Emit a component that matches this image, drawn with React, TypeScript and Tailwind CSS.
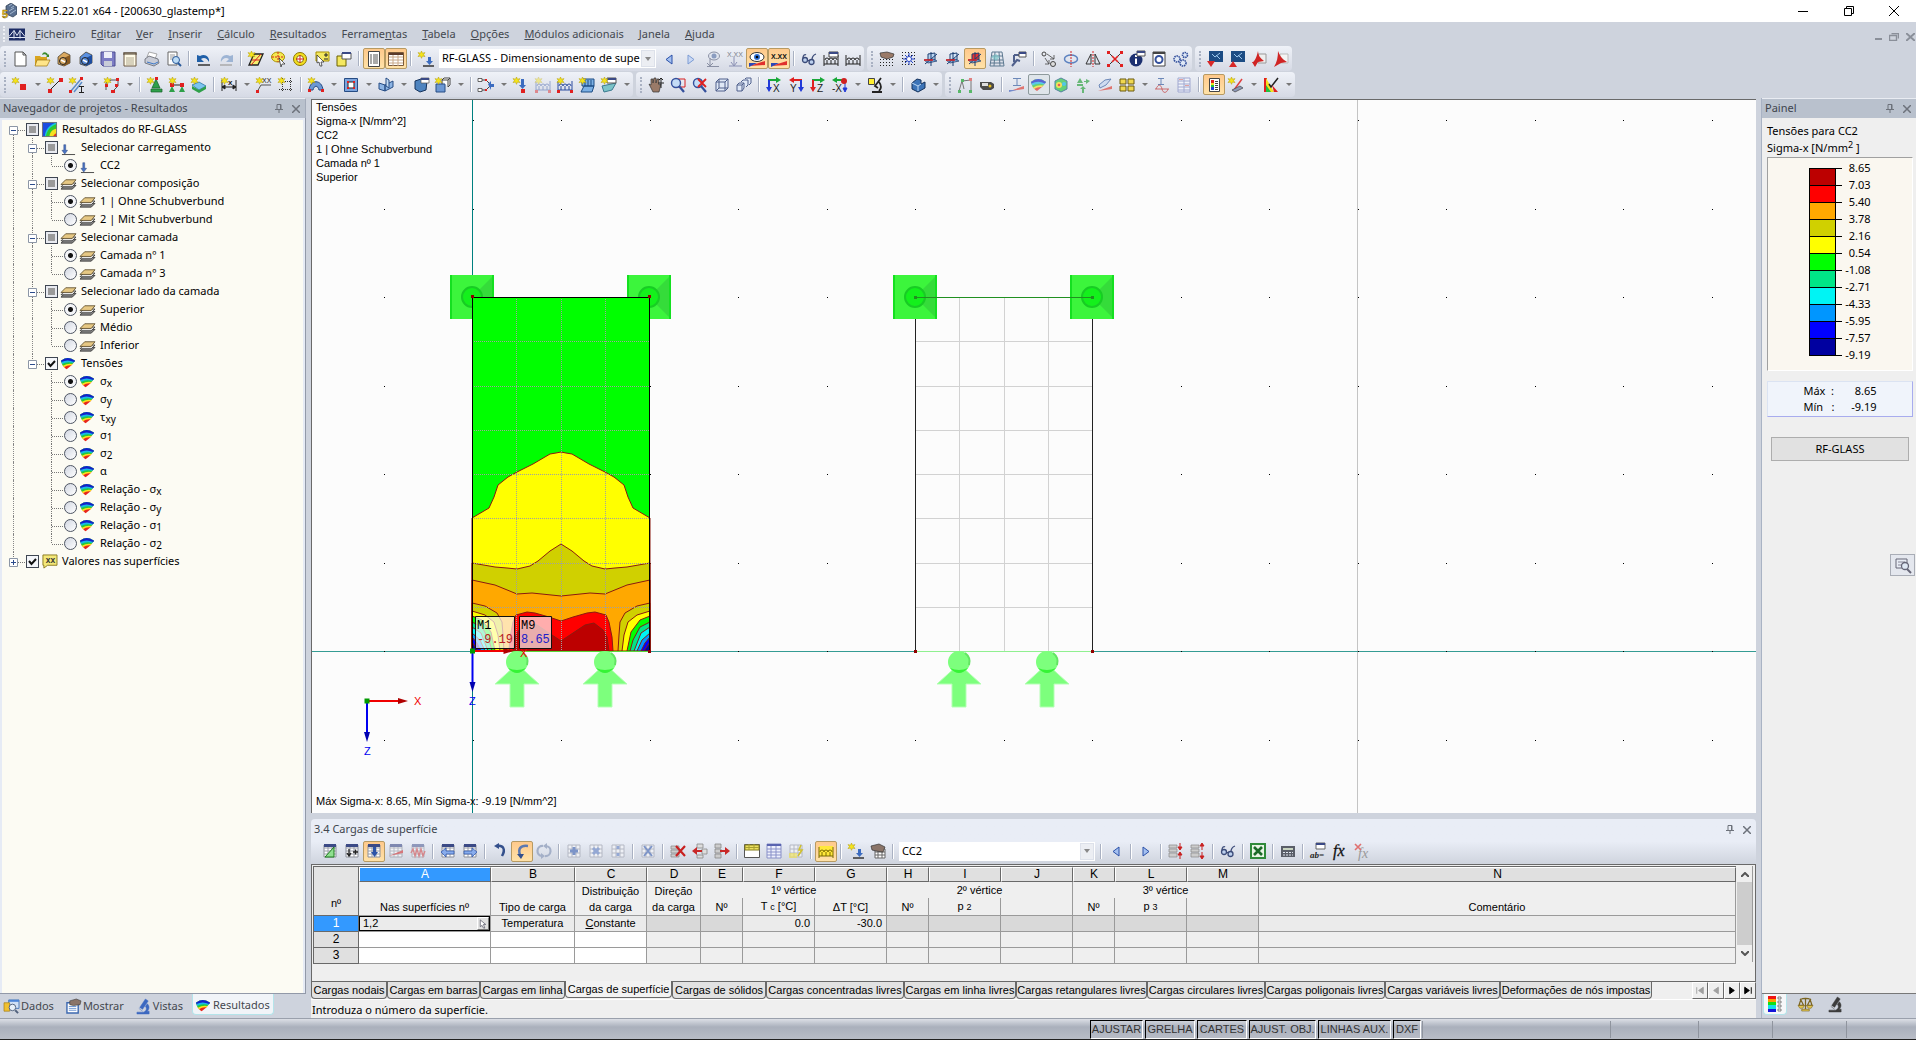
import { Fragment, useState } from 'react';
import type { ReactNode } from 'react';
import clsx from 'clsx';

type Pt = [number, number];

/* ---------- icons ---------- */

const star = (
  <path
    d="M3.5 0l1 2.2L7 1.6 5.6 3.6 7 5.6 4.5 5.1l-1 2.2-1-2.2L0 5.6l1.4-2L0 1.6l2.5.6z"
    fill="#f4e41c"
    stroke="#b39b00"
    strokeWidth=".5"
  />
);

const tableGrid = (
  <>
    <path d="M2 2h12v12H2z" fill="#fff" stroke="#8b8f99" />
    <path d="M2 5h12M2 8h12M2 11h12M6 2v12M10 2v12" stroke="#9a9ea8" fill="none" />
    <path d="M2 1h12v3H2z" fill="#3b4a86" />
  </>
);

const fadedGrid = <path d="M2 2h12v12H2zM2 6h12M2 10h12M6 2v12M10 2v12" fill="#eef0f5" stroke="#b4b8c4" />;

const loadRow = (color: string) => (
  <path
    d="M1 4v11M15 4v11M1 13h14M2 9a2 2 0 014 0 2 2 0 014 0 2 2 0 014 0M4 9v4M8 9v4M12 9v4"
    stroke={color}
    fill="none"
  />
);

const slope = <path d="M1 14l14-5v3z" fill="#e0463c" />;

const workPlane = (fill: string) => (
  <>
    <path d="M5 3l7-1v7l-7 1z" fill={fill} stroke="#1c3f73" />
    <path d="M1 9l9-1 4 2-9 2z" fill="#6fa3dd" stroke="#1c3f73" opacity=".8" />
    <path d="M8 1v14M2 13L14 3" stroke="#1c3f73" />
    <path d="M1 9h9" stroke="#e02020" strokeWidth="1.5" />
  </>
);

const viewAxis = (letter: string, h: string, v: string) => (
  <>
    <path d="M2 3h9" stroke={h} strokeWidth="2" />
    <path d="M10 0l5 3-5 3z" fill={h} />
    <path d="M3 3v8" stroke={v} strokeWidth="2" />
    <path d="M0 10l3 5 3-5z" fill={v} />
    <text x="7" y="15" fontSize="10" fontFamily="Liberation Sans" fill="#222">
      {letter}
    </text>
  </>
);

const surface = (
  <>
    <path d="M0 5Q7-1 15 5L11 10 6 14Q2 12 0 5z" fill="#e8261c" />
    <path d="M0 5Q7-1 15 5L11 10Q7 9.500 3 12Q1 9 0 5z" fill="#ffe21c" />
    <path d="M0 5Q7-1 15 5L12 8.500Q7 7.500 2 10.500Q1 8 0 5z" fill="#22cc3a" />
    <path d="M0 5Q7-1 15 5L13 7.500Q7 5.500 1 8.500z" fill="#18b8e8" />
    <path d="M0 5Q7-1 15 5L14 6.500Q7 3 .5 6.500z" fill="#1420c8" />
  </>
);

const cabinet = (front: string, side: string) => (
  <>
    <path d="M2 6l6-5 6 3v8l-6 3-6-2z" fill={front} stroke="#3a3020" strokeWidth=".7" />
    <path d="M8 7l6-3v8l-6 3z" fill={side} />
    <circle cx="7" cy="10" r="3.500" fill={front} stroke="#222" />
    <path d="M5 9l4 2" stroke="#fff" strokeWidth="1.500" />
  </>
);

const microscope = (color: string) => (
  <path d="M10 0l3 2-6 9-3-2zM3 10l4 3M12 5c3 3 2 6 0 8h2v3H1v-2h7c3-1 4-4 2-6z" fill={color} stroke={color} strokeWidth=".5" />
);

const cubeBlue = <path d="M2 4l6-2 6 2-1 9-6 2-5-3z" fill="#4d83bf" stroke="#14325c" />;

const icons: Record<string, ReactNode> = {
  new: <path d="M3 1h8l3 3v11H3zM11 1v3h3" fill="#fff" stroke="#555" />,
  open: (
    <>
      <path d="M1 5h5l1 1h6v8H1z" fill="#d9a520" />
      <path d="M3 9h13l-3 6H1z" fill="#ffe58a" stroke="#9c7410" strokeWidth=".7" />
      <path d="M8 4c1-4 5-3 6 0l1-1v3h-3l1-1c-1-2-3-2-5-1z" fill="#3b8a2c" />
    </>
  ),
  cabinetBrown: cabinet('#d9a860', '#8a5a20'),
  cabinetBlue: cabinet('#5a90e0', '#1c4ca0'),
  save: (
    <>
      <path d="M1 1h14v14H3l-2-2z" fill="#7c7cc4" stroke="#4c4c90" />
      <path d="M4 1h8v6H4z" fill="#eceef8" />
      <path d="M4 10h8v5H4z" fill="#c8ccd8" />
    </>
  ),
  notepad: (
    <>
      <path d="M2 2h12v13H2z" fill="#fffbe8" stroke="#6a5640" />
      <path d="M2 1v3M4 1v3M6 1v3M8 1v3M10 1v3M12 1v3M14 1v3" stroke="#4c4030" />
      <path d="M4 7h8M4 9h8M4 11h8M4 13h8" stroke="#b0a890" />
    </>
  ),
  print: (
    <>
      <path d="M5 1l8 2-2 5-8-2z" fill="#fff" stroke="#888" strokeWidth=".7" />
      <path d="M1 8l4-3 9 3 1 4-5 3-9-3z" fill="#c9ccd6" stroke="#50545e" strokeWidth=".7" />
      <path d="M3 11l7 2 4-2" stroke="#3c78c8" fill="none" />
    </>
  ),
  preview: (
    <>
      <path d="M2 1h9v13H2z" fill="#fff" stroke="#666" />
      <path d="M4 4h5M4 6h5M4 8h3" stroke="#999" />
      <circle cx="10" cy="9" r="3.500" fill="#bcdcf6" stroke="#2a5a9a" />
      <path d="M12 12l3 3" stroke="#2a5a9a" strokeWidth="2" />
    </>
  ),
  undo: (
    <>
      <path d="M1 4v7h7L5 8c3-2 6-1 8 3 1-5-4-9-9-6z" fill="#1f5fa8" />
      <path d="M2 14h12" stroke="#333" strokeWidth="1.500" />
    </>
  ),
  redo: (
    <>
      <path d="M15 4v7H8l3-3c-3-2-6-1-8 3-1-5 4-9 9-6z" fill="#9db4d4" />
      <path d="M2 14h12" stroke="#aaa" strokeWidth="1.500" />
    </>
  ),
  plane: (
    <>
      <path d="M6 3h9l-5 11H1z" fill="#f5ef70" stroke="#222" strokeWidth="1.300" />
      <path d="M3 14L13 3M4 9h8" stroke="#d82020" />
      {star}
    </>
  ),
  starAxes: (
    <>
      <ellipse cx="8" cy="6" rx="6.500" ry="5" fill="#f4e850" stroke="#a89000" />
      <path d="M8 1v10M2 6h12" stroke="#d82020" strokeDasharray="2 1" />
      <path d="M9 7l6 6h-3l-1 3z" fill="#fff" stroke="#222" strokeWidth=".7" />
    </>
  ),
  starTarget: (
    <>
      <circle cx="8" cy="8" r="6.500" fill="#f4e020" stroke="#8a7400" />
      <circle cx="8" cy="8" r="3.500" fill="#fff" stroke="#8a7400" />
      <path d="M8 4v8M4 8h8" stroke="#d82020" />
    </>
  ),
  select: (
    <>
      <path d="M2 1h13v9H2z" fill="#f4e860" stroke="#a89000" />
      <path d="M10 4h4M12 2v4M10 8h4" stroke="#222" />
      <path d="M3 4l7 7H7l1 4H6l-1-4-2 1z" fill="#fff" stroke="#222" strokeWidth=".7" />
    </>
  ),
  copyYellow: (
    <>
      <path d="M1 5h9v10H1z" fill="#f4e860" stroke="#6a6000" />
      <path d="M6 2h9v6H6z" fill="#fff" stroke="#555" />
      <path d="M6 1h9v2H6z" fill="#3b4a86" />
    </>
  ),
  navTable: (
    <>
      <path d="M2.500.5h11v15h-11z" fill="#fff" stroke="#444" />
      <path d="M4 4h2M4 6h2M4 8h2M4 10h2M4 12h2M7 4h5M7 6h5M7 8h5M7 10h5M7 12h5" stroke="#555" />
    </>
  ),
  tableOn: (
    <>
      <path d="M.5 1.500h15v13H.5z" fill="#fff" stroke="#7a5a3a" />
      <path d="M1 3h14" stroke="#5a3a2a" strokeWidth="2" />
      <path d="M1 6h14M1 9h14M1 12h14M5 4v11M10 4v11" stroke="#c8a888" />
    </>
  ),
  loadStar: (
    <>
      {star}
      <path d="M5 15h11" stroke="#333" strokeWidth="1.500" />
      <path d="M10 6h3v4h2l-3.500 4L8 10h2z" fill="#3c6cc0" />
    </>
  ),
  load: (
    <>
      <path d="M1 15.500h14" stroke="#444" />
      <path d="M3 5h2v6h2l-3 4-3-4h2z" fill="#4a74c4" stroke="#27407c" strokeWidth=".5" />
    </>
  ),
  prev: <path d="M11 4v9L5 8.500z" fill="#a4c0f0" stroke="#2a50a8" />,
  next: <path d="M5 4v9l6-4.500z" fill="#c9d8f4" stroke="#7c9cd4" />,
  nextOn: <path d="M5 4v9l6-4.500z" fill="#a4c0f0" stroke="#2a50a8" />,
  eyeGray: (
    <>
      <ellipse cx="9" cy="5" rx="5.500" ry="4" fill="#dfe4ee" stroke="#8a90a4" />
      <circle cx="9" cy="5" r="2.500" fill="#8a9cc0" />
      <path d="M5 7v8M2 12l3 3 3-3M2 15.500h12" stroke="#8a90a4" fill="none" />
    </>
  ),
  valGray: (
    <>
      <text x="0" y="6" fontSize="7" fontFamily="Liberation Sans" fill="#7c808c">X.XX</text>
      <path d="M2 15h13M7 6v8M4 11l3 4 3-4" stroke="#8a90b4" fill="none" />
    </>
  ),
  eyeOn: (
    <>
      <path d="M0 15l16-5v4z" fill="#e0302c" />
      <path d="M0 12h8l-8 4z" fill="#2a48b8" />
      <ellipse cx="8" cy="6" rx="7" ry="4.500" fill="#fff" stroke="#333" />
      <circle cx="8" cy="6" r="3" fill="#2c6cd0" />
      <circle cx="8" cy="6" r="1.300" fill="#000" />
    </>
  ),
  valOn: (
    <>
      <path d="M0 15l16-5v4z" fill="#e0302c" />
      <path d="M0 12h8l-8 4z" fill="#2a48b8" />
      <text x="0" y="8" fontSize="7" fontWeight="bold" fontFamily="Liberation Sans" fill="#111">X.XX</text>
    </>
  ),
  glasses: (
    <>
      <path d="M2 7c0-3 2-4 3-3M11 9c0-3 1-5 4-6M6 9l3 1" stroke="#3a4a78" strokeWidth="1.300" />
      <circle cx="4" cy="9" r="2.500" fill="#bcd0ee" stroke="#3a4a78" strokeWidth="1.300" />
      <circle cx="10.500" cy="11" r="2.500" fill="#bcd0ee" stroke="#3a4a78" strokeWidth="1.300" />
    </>
  ),
  loadsDlg: (
    <>
      {loadRow('#222')}
      <path d="M6 1h9v5H6z" fill="#fff" stroke="#444" />
      <path d="M6 1h9v2H6z" fill="#3b4a86" />
    </>
  ),
  loads: loadRow('#222'),
  loadActive: (
    <>
      <path d="M1 3h14v10H1z" fill="#ffe83a" />
      {loadRow('#7a6a00')}
    </>
  ),
  gridHand: (
    <>
      <path d="M1 8.500h14M1 11.500h14M1 14.500h14" stroke="#222" strokeDasharray="1 2" />
      <path d="M1 2l7-1 7 2-1 3-6 2-6-2z" fill="#9a7a68" stroke="#333" strokeWidth=".7" />
    </>
  ),
  grid: (
    <>
      <path d="M1 1.500h14M1 4.500h14M1 7.500h14M1 10.500h14M1 13.500h14" stroke="#222" strokeDasharray="1 2" />
      <path d="M8 2v12M2 8h12M4 4l8 8M12 4l-8 8" stroke="#2a48c8" />
      <circle cx="8" cy="8" r="2.500" fill="#fff" stroke="#2a48c8" />
    </>
  ),
  wpXY: workPlane('#b9d4f0'),
  wpYZ: workPlane('#d4e4f6'),
  wpXZ: workPlane('#e83030'),
  gridMesh: (
    <>
      <path d="M3 1h10l2 14H1zM2.500 5h11M2 9h12M1.500 12h13M6 1L5 15M10 1l1 14" fill="none" stroke="#5c7890" />
      <path d="M2 6l5-3 4 3-4 4z" fill="#7cc4c8" opacity=".7" />
    </>
  ),
  wrench: (
    <>
      <path d="M3 4h6M3 4v7M1 15l5-6 3 1" stroke="#50608c" strokeWidth="2" fill="none" />
      <path d="M8 1h7v5H8z" fill="#fff" stroke="#555" />
      <path d="M8 1h7v2H8z" fill="#3b4a86" />
    </>
  ),
  move: (
    <>
      <circle cx="3" cy="3" r="2" fill="none" stroke="#444" />
      <circle cx="12" cy="13" r="2.500" fill="#ddd" stroke="#444" />
      <path d="M6 3l7 5M13 4v4H9M4 7l4 6M8 9v4H4" stroke="#444" fill="none" strokeWidth=".8" />
    </>
  ),
  rotate: (
    <>
      <ellipse cx="8" cy="8" rx="6.500" ry="4" fill="none" stroke="#5c82c0" strokeWidth="1.500" />
      <path d="M8 0v16" stroke="#d82020" strokeDasharray="2 1" />
    </>
  ),
  mirror: (
    <>
      <path d="M6 3v10H1zM10 3v10h5z" fill="none" stroke="#333" />
      <path d="M8 0v16" stroke="#d82020" strokeDasharray="2 1" />
    </>
  ),
  deleteX: (
    <>
      <path d="M2 2l12 12M14 2L2 14" stroke="#333" />
      <path d="M0 0h3v3H0zM13 0h3v3h-3zM0 13h3v3H0zM13 13h3v3h-3z" fill="#e02020" />
      <path d="M5 5l6 6M11 5l-6 6" stroke="#e02020" strokeWidth="1.600" />
    </>
  ),
  info: (
    <>
      <circle cx="7" cy="9" r="6.500" fill="#1c3070" />
      <path d="M7 4v2M7 7.500V13" stroke="#fff" strokeWidth="2" />
      <path d="M8 0h8v5H8z" fill="#fff" stroke="#555" />
      <path d="M8 0h8v2H8z" fill="#3b4a86" />
    </>
  ),
  gearDoc: (
    <>
      <path d="M2 1h12v14H2z" fill="#fff" stroke="#444" />
      <circle cx="8" cy="8.500" r="3.500" fill="#fff" stroke="#34509c" strokeWidth="2" />
      <path d="M2 2h12" stroke="#444" strokeWidth="2" />
    </>
  ),
  gears: (
    <g fill="#dfe8f6" stroke="#34509c" strokeWidth="1.600" strokeDasharray="1.500 .7">
      <circle cx="4" cy="8" r="3" />
      <circle cx="12" cy="4" r="2.500" />
      <circle cx="10" cy="12" r="3" />
    </g>
  ),
  imgDown: (
    <>
      <path d="M2 0h14v11H2z" fill="#1c4c84" />
      <path d="M5 3l3 3 5-4M9 4l4 4" stroke="#9cc8ee" fill="none" />
      <path d="M0 10h8l-4 6z" fill="#d82828" />
    </>
  ),
  imgUp: (
    <>
      <path d="M2 0h14v11H2z" fill="#1c4c84" />
      <path d="M5 3l3 3 5-4M9 4l4 4" stroke="#9cc8ee" fill="none" />
      <path d="M0 16h8l-4-6z" fill="#d82828" />
    </>
  ),
  pdfDown: (
    <>
      <path d="M7 3h8v9H7z" fill="#eee" stroke="#999" />
      <path d="M7 0c0 4 2 7 6 10l-6 1-6 1c3-2 5-7 6-12zM1 11h6l-3 5z" fill="#d02424" />
    </>
  ),
  pdfUp: (
    <>
      <path d="M7 3h8v9H7z" fill="#f4f4f4" stroke="#bbb" />
      <path d="M5 0c2 5 4 8 9 11l-6 1-7 4c3-5 4-10 4-16z" fill="#d02424" />
    </>
  ),

  node: (
    <>
      {star}
      <path d="M8 7h6v6H8z" fill="#e02020" />
    </>
  ),
  line: (
    <>
      <path d="M3 13L13 3" stroke="#222" />
      <path d="M1 12h4v4H1zM12 1h4v4h-4z" fill="#e02020" />
      {star}
    </>
  ),
  member: (
    <>
      <path d="M2 14L12 2M5 15l8-10" stroke="#5c8cc8" strokeWidth="1.500" />
      <path d="M0 13h3v3H0zM11 0h3v3h-3z" fill="#e02020" />
      <path d="M10 9.500h5M10 15.500h5M12.500 9v6" stroke="#222" />
      {star}
    </>
  ),
  polyline: (
    <>
      <path d="M2 13V6l5-3h7v6l-5 5" fill="none" stroke="#555" />
      <path d="M1 7h3v3H1zM12 1h3v3h-3zM7 13h4v3H7zM11 7h3v3h-3z" fill="#e02020" />
      {star}
    </>
  ),
  support: (
    <>
      <path d="M9 2l4 9H5zM4 12h11v3H4z" fill="#2fa04a" stroke="#14602a" strokeWidth=".7" />
      <path d="M8 0h3v3H8z" fill="#e02020" />
      {star}
    </>
  ),
  lineSupport: (
    <>
      <path d="M3 8h10" stroke="#222" />
      <path d="M3 9l3 6H0zM13 9l3 6h-6z" fill="#2fa04a" />
      <path d="M1 6h4v4H1zM11 6h4v4h-4z" fill="#e02020" />
      {star}
    </>
  ),
  surfSupport: (
    <>
      <path d="M1 8l7-3 7 4-7 4z" fill="#7cc4ee" stroke="#1c6c9c" strokeWidth=".7" />
      <path d="M1 9v3l7 4 7-4V9l-7 4z" fill="#2fa04a" />
      {star}
    </>
  ),
  dimension: (
    <>
      <path d="M1 3v11M15 3v11M1 10h14M1 10l3-2v4zM15 10l-3-2v4z" stroke="#222" fill="#222" />
      <text x="7" y="8" fontSize="8" fontFamily="Liberation Sans" fontWeight="bold" fill="#222">x</text>
      {star}
    </>
  ),
  comment: (
    <>
      <text x="6" y="6" fontSize="7" fontFamily="Liberation Sans" fill="#222">XX</text>
      <path d="M5 8h10M5 8l-4 7" stroke="#555" />
      <path d="M0 13h3v3H0z" fill="#e02020" />
      {star}
    </>
  ),
  guide: (
    <>
      <path d="M4.500 1v14M12.500 1v14M1 4.500h14M1 12.500h14" stroke="#333" strokeDasharray="1 1" />
      {star}
    </>
  ),
  arch: (
    <>
      <path d="M1 13c1-11 13-11 14 0h-4c-1-5-5-5-6 0z" fill="#6c98d4" stroke="#264c84" />
      <path d="M0 12h3v3H0zM13 12h3v3h-3z" fill="#e02020" />
      {star}
    </>
  ),
  opening: (
    <>
      <path d="M1.500 1.500h13v13h-13z" fill="#7ca4dc" stroke="#264c84" />
      <path d="M5 5h6v6H5z" fill="#fff" stroke="#222" />
      <path d="M4 4h2v2H4zM10 4h2v2h-2zM4 10h2v2H4zM10 10h2v2h-2z" fill="#e02020" />
    </>
  ),
  intersect: (
    <>
      <path d="M1 6l6 2v6l-6-2zM7 8l8-4v6l-8 4z" fill="#8cb4e4" stroke="#264c84" />
      <path d="M8 1l3 2v8l-3-2z" fill="#c4dcf4" stroke="#264c84" />
    </>
  ),
  solid: (
    <>
      {cubeBlue}
      <path d="M8 1h8v5H8z" fill="#fff" stroke="#555" strokeWidth=".7" />
      <path d="M8 1h8v2H8z" fill="#3b4a86" />
    </>
  ),
  cubes: (
    <>
      <path d="M1 7h9v8H1z" fill="#6c98d4" stroke="#264c84" />
      <path d="M7 3l2-2h6v7l-2 2M7 3h6v7M13 3l2-2M7 3v4" fill="#fff" stroke="#444" />
      {star}
    </>
  ),
  joint: (
    <>
      <path d="M2 3h6l4 4M2 13h6l4-4" stroke="#444" fill="none" />
      <path d="M0 1.500h4v3H0zM0 11.500h4v3H0z" fill="#fff" stroke="#444" strokeWidth=".8" />
      <path d="M10 7l3-3v3h3v3h-3v3z" fill="#3c6cc0" />
      <path d="M7 2h2v2H7zM7 12h2v2H7z" fill="#e02020" />
    </>
  ),
  nodeLoad: (
    <>
      <path d="M8 2h3v6h2l-3.500 4L6 8h2z" fill="#3c6cc0" />
      <path d="M8 12h4v4H8z" fill="#e02020" />
      {star}
    </>
  ),
  lineLoadFaded: (
    <g opacity=".45">
      {loadRow('#3c5ca8')}
      <path d="M0 13h3v3H0zM13 13h3v3h-3z" fill="#e02020" />
      {star}
    </g>
  ),
  lineLoad: (
    <>
      {loadRow('#2c4ca0')}
      <path d="M0 13h3v3H0zM13 13h3v3h-3z" fill="#e02020" />
      {star}
    </>
  ),
  surfLoad: (
    <>
      <path d="M3 2h12v7H3zM5 9h10l-2 6H2z" fill="#7cb0e4" stroke="#1c4c84" />
      <path d="M6 3v6M9 3v6M12 3v6" stroke="#1c4c84" />
      {star}
    </>
  ),
  freeLoad: (
    <>
      <path d="M1 9l14-3-4 7-8 2z" fill="#7cc4c8" stroke="#3a7a90" />
      <path d="M6 1h9v5H6z" fill="#fff" stroke="#555" />
      <path d="M6 1h9v2H6z" fill="#3b4a86" />
      {star}
    </>
  ),
  hand: (
    <>
      <path d="M1 7l2 1V2h2v4l1-5h2v5l1-4h2v6l2-1-2 8H5z" fill="#9a7a68" stroke="#333" strokeWidth=".7" />
      <path d="M13 1v10M11 3l2-2 2 2M10 6h6" stroke="#222" fill="none" />
    </>
  ),
  zoomWin: (
    <>
      <path d="M6 2h9v8H6z" fill="none" stroke="#d82020" />
      <circle cx="6" cy="6" r="4.500" fill="#c4dcf6" stroke="#34509c" strokeWidth="1.400" />
      <path d="M9 9l5 6" stroke="#34509c" strokeWidth="2.200" />
    </>
  ),
  zoomX: (
    <>
      <circle cx="6" cy="6" r="4.500" fill="#c4dcf6" stroke="#34509c" strokeWidth="1.400" />
      <path d="M9 9l5 6" stroke="#34509c" strokeWidth="2.200" />
      <path d="M6 2l8 8M14 2l-8 8" stroke="#e02020" strokeWidth="1.800" />
    </>
  ),
  cube: <path d="M2 5l3-3h9v9l-3 3H2zM2 5h9v9M11 5l3-3M5 2v9h9M5 11l-3 3" fill="#dfe8f6" stroke="#50608c" />,
  cubes2: (
    <path d="M1 8l2-2h5v5l-2 3H1zM5 5l2-2h5v5l-2 2M9 2l1-1h5v5l-2 2M1 8h5v6M6 8l2-2" fill="#dfe8f6" stroke="#50608c" />
  ),
  viewX: viewAxis('X', '#18a838', '#2038d8'),
  viewY: (
    <>
      <path d="M5 3h9" stroke="#e02020" strokeWidth="2" />
      <path d="M6 0L1 3l5 3z" fill="#e02020" />
      <path d="M13 3v8" stroke="#2038d8" strokeWidth="2" />
      <path d="M10 10l3 5 3-5z" fill="#2038d8" />
      <text x="2" y="15" fontSize="10" fontFamily="Liberation Sans" fill="#222">Y</text>
    </>
  ),
  viewZ: viewAxis('Z', '#18a838', '#e02020'),
  viewNX: (
    <>
      <path d="M4 3h8" stroke="#18a838" strokeWidth="2" />
      <path d="M5 0L0 3l5 3z" fill="#18a838" />
      <path d="M13 6v6M11 11l2 4 2-4z" stroke="#2038d8" fill="#2038d8" />
      <circle cx="12" cy="4" r="3" fill="#d02020" />
      <text x="0" y="15" fontSize="10" fontFamily="Liberation Sans" fill="#222">-X</text>
    </>
  ),
  render: (
    <>
      <path d="M1.500 1.500h6v6h-6z" fill="#ffee30" stroke="#444" />
      <path d="M14 1L8 9l3 2M5 15h10M12 5c3 4 2 7 0 9" stroke="#222" strokeWidth="1.800" fill="none" />
    </>
  ),
  solidBlue: (
    <>
      <path d="M2 6l5-4 4 1v4l4-2v6l-7 4-6-3z" fill="#3c74b8" stroke="#14325c" />
      <path d="M8 14V9l3-2M8 9L2 6" stroke="#bcd8f4" fill="none" />
    </>
  ),
  frame: (
    <>
      <path d="M2 14L5 4l9-1v11M5 4l2 8" stroke="#777" fill="none" />
      <path d="M1 13h3v3H1zM4 2h3v3H4z" fill="#58b868" />
      <path d="M12 1h3v3h-3z" fill="#e08080" />
      <path d="M12 13h3v3h-3z" fill="#58b868" />
    </>
  ),
  camera: (
    <>
      <path d="M1 5h11l3 2v4l-3 2H4L1 10z" fill="#4a4a4a" />
      <path d="M3 6h6v3H3z" fill="#ddd" />
      <circle cx="11" cy="9" r="1.500" fill="#e8c020" />
    </>
  ),
  memberRes: (
    <>
      <path d="M4 1.500h8M8 1v7M4 8.500h8" stroke="#6c88b8" fill="none" />
      <g opacity=".7">
        {slope}
        <path d="M0 13h8l-8 2z" fill="#4868c0" />
      </g>
    </>
  ),
  surfaceFaded: <g opacity=".65">{surface}</g>,
  solidRes: (
    <g opacity=".7">
      <path d="M2 4l6-3 6 3v8l-6 3-6-3z" fill="#30c848" stroke="#1c5c80" />
      <circle cx="6" cy="8" r="3" fill="#ffe21c" />
      <circle cx="6" cy="8" r="1.300" fill="#e8261c" />
      <circle cx="11" cy="7" r="2" fill="#18b8e8" />
    </g>
  ),
  supportRes: (
    <g fill="#68b878">
      <path d="M5 1l3 5H2zM2 7h6v2H2zM8 9l3 3H9v4H7v-4H5zM15 4l-4-2v2H9v1h2v2z" />
    </g>
  ),
  section: (
    <>
      <path d="M2 8l6-5 6-1-5 6-6 3z" fill="#cfdcf0" stroke="#6c88b8" />
      <g opacity=".7">{slope}</g>
    </>
  ),
  panels: (
    <path d="M1 2h6v5H1zM9 2h6v5H9zM1 9h6v5H1zM9 9h6v5H9z" fill="#f0d850" stroke="#6a5a10" />
  ),
  wave: (
    <>
      <path d="M4 1.500h6M7 1v6M4 7.500h6" stroke="#6c88b8" fill="none" />
      <path d="M1 12h14M2 12c2-5 5-5 6 0s5 4 6 0" stroke="#c85050" fill="none" strokeWidth=".8" />
    </>
  ),
  tblFaded: (
    <>
      <path d="M2 1h12v14H2zM2 4h12M2 7h12M2 10h12M2 13h12M8 1v14" fill="#f0f2fa" stroke="#a0a8d0" />
      <path d="M3 2h4v1H3zM9 8h4v1H9z" fill="#e0a0a0" />
    </>
  ),
  panelOn: (
    <>
      <path d="M3.500 1.500h10v13h-10z" fill="#fff" stroke="#444" />
      <path d="M5 3h3v3H5z" fill="#e02020" />
      <path d="M5 6h3v2H5z" fill="#f4e020" />
      <path d="M5 8h3v2H5z" fill="#20c040" />
      <path d="M5 10h3v3H5z" fill="#2040d0" />
      <path d="M9 4.500h3M9 6.500h3M9 8.500h3M9 10.500h3M9 12.500h3" stroke="#444" />
    </>
  ),
  wand: (
    <>
      {star}
      <path d="M6 13L14 2" stroke="#e04040" strokeWidth="1.500" />
      <path d="M4 13l8-4 3 2-8 4z" fill="#8c98b8" stroke="#444" strokeWidth=".7" />
    </>
  ),
  colors: (
    <>
      <path d="M1 1h3v14H1z" fill="#e02020" />
      <path d="M3 1l8 14H5L3 9z" fill="#f4e020" />
      <path d="M3 8l5 7H3z" fill="#20c040" />
      <path d="M15 1L8 10l-2-3" stroke="#222" strokeWidth="1.500" fill="none" />
      <path d="M9 8l6 7h-4z" fill="#e02020" />
    </>
  ),

  tblTri: (
    <>
      {tableGrid}
      <path d="M3 14L12 4v10z" fill="#8fe08f" stroke="#1c7a1c" />
    </>
  ),
  tblAdd: (
    <>
      {tableGrid}
      <path d="M5 6v7M3 10l2 3 2-3M9 9h5M11.500 6.500v5" stroke="#222" fill="none" strokeWidth="1.300" />
    </>
  ),
  tblDown: (
    <>
      {tableGrid}
      <path d="M7 4h3v5h2l-3.500 5L5 9h2z" fill="#2c54a8" />
    </>
  ),
  tblSlope: (
    <g opacity=".6">
      {tableGrid}
      <path d="M1 13l14-6v3z" fill="#d03030" />
    </g>
  ),
  tblWave: (
    <g opacity=".5">
      {tableGrid}
      <path d="M1 10l2-4 2 7 2-7 2 7 2-7 2 7 2-5" stroke="#d03030" fill="none" strokeWidth="1.400" />
    </g>
  ),
  tblLeft: (
    <>
      {tableGrid}
      <path d="M1 9l5-4v3h8v3H6v3z" fill="#88acec" stroke="#2a50a8" strokeWidth=".7" />
    </>
  ),
  tblRight: (
    <>
      {tableGrid}
      <path d="M15 9l-5-4v3H2v3h8v3z" fill="#88acec" stroke="#2a50a8" strokeWidth=".7" />
    </>
  ),
  sync1: (
    <>
      <path d="M5 3c6-1 9 3 5 10" stroke="#34508c" strokeWidth="2.500" fill="none" />
      <path d="M7 0v6L2 3z" fill="#34508c" />
    </>
  ),
  sync2: (
    <>
      <path d="M14 3C6 2 4 6 6 12" stroke="#5c78b0" strokeWidth="2.500" fill="none" />
      <path d="M3 11l7 0-3 5z" fill="#34508c" />
    </>
  ),
  sync3: (
    <>
      <path d="M7 3a5 5 0 00-1 10M9 13a5 5 0 001-10" stroke="#a4b0c8" strokeWidth="2.200" fill="none" />
      <path d="M5 10l4 3-4 3zM11 0v6L7 3z" fill="#a4b0c8" />
    </>
  ),
  tPlus: (
    <>
      {fadedGrid}
      <path d="M8 4v8M4 8h8" stroke="#7c94c8" strokeWidth="3" />
    </>
  ),
  tX: (
    <>
      {fadedGrid}
      <path d="M5 5l6 6M11 5l-6 6" stroke="#94a8d4" strokeWidth="3" />
    </>
  ),
  tDots: (
    <>
      {fadedGrid}
      <path d="M8 3v3M8 10v3" stroke="#94a8d4" strokeWidth="3" />
    </>
  ),
  tDel: (
    <>
      {fadedGrid}
      <path d="M4 3l8 10M12 3L4 13" stroke="#7c94c8" strokeWidth="2" />
    </>
  ),
  rowDel: (
    <>
      <path d="M1 3h8v3H1zM1 7h8v3H1zM1 11h8v3H1z" fill="#ccc" stroke="#888" strokeWidth=".7" />
      <path d="M6 3l9 10M15 3L6 13" stroke="#c82020" strokeWidth="2.200" />
    </>
  ),
  rowLeft: (
    <>
      <path d="M5 1h6v4H5zM10 6h5v5h-5zM5 12h6v3H5z" fill="#ddd" stroke="#888" strokeWidth=".8" />
      <path d="M0 8l5-4v3h5v2H5v3z" fill="#c82828" />
    </>
  ),
  rowRight: (
    <>
      <path d="M1 1h6v4H1zM1 6h6v4H1zM1 11h6v4H1z" fill="#ccc" stroke="#888" strokeWidth=".8" />
      <path d="M16 8l-5-4v3H6v2h5v3z" fill="#c82828" />
    </>
  ),
  hdrYellow: (
    <>
      <path d="M.5 1.500h15v13H.5z" fill="#fff" stroke="#555" />
      <path d="M1 2h14v5H1z" fill="#ece060" stroke="#888020" />
      <path d="M1 4.500h14M5 1v6M10 1v6" stroke="#a8a030" />
    </>
  ),
  hdrBlue: (
    <>
      <path d="M1 1h14v14H1z" fill="#eef0fc" stroke="#8890c8" />
      <path d="M1 2h14" stroke="#5a64b0" strokeWidth="2" />
      <path d="M1 6h14M1 9h14M1 12h14M5 3v12M10 3v12" stroke="#8890c8" />
    </>
  ),
  hdrStar: (
    <>
      {fadedGrid}
      <path d="M1 10h8v5H1z" fill="#ece060" opacity=".7" />
      <path d="M13 2l-2 5h3l-4 6" stroke="#d0c030" fill="none" strokeWidth="1.600" />
    </>
  ),
  handTbl: (
    <>
      <path d="M5 6h10v9H5zM5 9h10M5 12h10M8 6v9M12 6v9" fill="#fff" stroke="#666" />
      <path d="M1 3l8-2 6 3-2 5-7-1-4-1z" fill="#8a7468" stroke="#333" strokeWidth=".7" />
    </>
  ),
  rowsUp: (
    <>
      <path d="M1 2h8v3H1zM1 6h8v3H1zM1 10h8v4H1z" fill="#ccc" stroke="#888" strokeWidth=".7" />
      <path d="M12 0v6M10 4l2 3 2-3zM12 16v-6M10 12l2-3 2 3z" stroke="#c82020" fill="#c82020" />
    </>
  ),
  rowsDown: (
    <>
      <path d="M1 2h8v3H1zM1 6h8v3H1zM1 10h8v4H1z" fill="#ccc" stroke="#888" strokeWidth=".7" />
      <path d="M12 7V1M10 3l2-3 2 3zM12 9v6M10 13l2 3 2-3z" stroke="#c82020" fill="#c82020" />
    </>
  ),
  excel: (
    <>
      <path d="M0 0h16v16H0z" fill="#2f8a3a" />
      <path d="M2 2h12v12H2z" fill="#e8f4e4" />
      <path d="M4 4l8 8M12 4l-8 8" stroke="#1c6a28" strokeWidth="2.600" />
    </>
  ),
  calc: (
    <>
      <path d="M1 3h14v11H1z" fill="#5a5e68" />
      <path d="M3 5h10v2H3z" fill="#c8d4c0" />
      <path d="M3 9.500h10M3 12h10" stroke="#dfe4ee" strokeDasharray="2 1" />
    </>
  ),
  abEq: (
    <>
      <path d="M6 0h9v6H6z" fill="#fff" stroke="#666" />
      <path d="M6 1h9" stroke="#3b4a86" strokeWidth="2" />
      <text x="0" y="15" fontSize="9" fontStyle="italic" fontWeight="bold" fontFamily="Liberation Serif" fill="#222">ab=</text>
    </>
  ),
  fx: (
    <text x="1" y="13" fontSize="16" fontStyle="italic" fontFamily="Liberation Serif" fill="#111" stroke="#111" strokeWidth=".3">fx</text>
  ),
  fxOff: (
    <>
      <text x="4" y="15" fontSize="14" fontStyle="italic" fontFamily="Liberation Serif" fill="#999">fx</text>
      <path d="M1 1l6 6M7 1L1 7" stroke="#e07070" strokeWidth="1.600" />
    </>
  ),

  rainbow: (
    <>
      <path d="M0 0h16v16H0z" fill="#1c4ce0" />
      <path d="M3 16C3 8 8 3 16 0v16z" fill="#18c8d8" />
      <path d="M4 16C5 9 9 4 16 2v14z" fill="#30c830" />
      <path d="M8 16c0-5 3-8 8-9v9z" fill="#f4e020" />
      <path d="M12 16c0-2 2-4 4-4v4z" fill="#e83020" />
      <path d="M.5.5h15v15H.5z" fill="none" stroke="#777" />
    </>
  ),
  layers: (
    <>
      <path d="M0 14l4-4h12l-4 4z" fill="#8c8c8c" stroke="#222" strokeWidth=".8" />
      <path d="M0 11.500l4-4h12l-4 4z" fill="#e8e8e8" stroke="#222" strokeWidth=".8" />
      <path d="M0 9l5-5h11l-4 5z" fill="#e6c884" stroke="#4a3a1a" strokeWidth=".8" />
    </>
  ),
  surface,
  values: (
    <>
      <path d="M1 1h15v11H6l-4 3v-3H1z" fill="#f4e878" stroke="#8a7a20" />
      <text x="4" y="10" fontSize="9" fontWeight="bold" fontFamily="Liberation Sans" fill="#333">xx</text>
    </>
  ),
  data: (
    <>
      <path d="M5 1h11v9H5z" fill="#cfe0f6" stroke="#4a78b8" />
      <path d="M5 1h11v2H5z" fill="#4a84d8" />
      <path d="M0 4h6v9H0z" fill="#f0c030" stroke="#a07810" strokeWidth=".7" />
      <circle cx="9" cy="9" r="3.500" fill="#e6f0fa" stroke="#50607c" />
      <path d="M12 12l3 3" stroke="#50607c" strokeWidth="2" />
    </>
  ),
  show: (
    <>
      <path d="M1 4h12v11H1z" fill="#fff" stroke="#3c68b0" strokeWidth="1.500" />
      <path d="M3 8h8M3 10h8M3 12h8" stroke="#6c94d0" />
      <path d="M4 2l7-2 5 2-1 4-7 1-4-1z" fill="#8a7468" stroke="#333" strokeWidth=".6" />
    </>
  ),
  views: microscope('#3c68c0'),
  micro: microscope('#3c3c3c'),
  scale: (
    <>
      <path d="M2 3c4-2 8-2 12 0M8 1v12M4 14h8M3 3L1 9h5zM13 3l-3 6h5z" fill="none" stroke="#7a6420" strokeWidth="1.300" />
      <path d="M0 9h7l-2 3H2zM9 9h7l-2 3h-3zM4 13h8v2H4z" fill="#e0c450" stroke="#7a6420" strokeWidth=".6" />
    </>
  ),
  legend: (
    <>
      <path d="M1 0h8v3H1z" fill="#f01414" />
      <path d="M1 3h8v3H1z" fill="#ffa000" />
      <path d="M1 6h8v3H1z" fill="#14e014" />
      <path d="M1 9h8v4H1z" fill="#14e0e8" />
      <path d="M1 13h8v3H1z" fill="#1414d8" />
      <path d="M11 1h3v2h-3zM11 5h3v2h-3zM11 9h3v2h-3zM11 13h3v2h-3z" fill="#fff" stroke="#666" strokeWidth=".8" />
    </>
  ),
  search: (
    <>
      <path d="M1 2h11v9H1z" fill="#e8ecf4" stroke="#667" />
      <path d="M3 5h7M3 8h7" stroke="#889" />
      <circle cx="10" cy="9" r="3.500" fill="#dfe8f4" stroke="#667" strokeWidth="1.300" />
      <path d="M12 12l4 4" stroke="#667" strokeWidth="2" />
    </>
  ),
};

function Icon({ name, className = 'size-4' }: { name: string; className?: string }) {
  return (
    <svg viewBox="0 0 16 16" className={clsx('shrink-0 overflow-visible', className)} fill="none" aria-hidden="true">
      {icons[name]}
    </svg>
  );
}

/* ---------- toolbars ---------- */

// "|" separator, "v" drop-down arrow, "!" prefix = pressed, "~" prefix = pressed but disabled
function Tools({ items }: { items: string }) {
  return (
    <>
      {items.split(' ').map((item, i) => {
        if (item === '|') return <span key={i} className="mx-[3px] h-[15px] w-[2px] shrink-0 border-l border-[#a9b1c2] bg-white" />;
        if (item === 'v')
          return (
            <button key={i} type="button" aria-label="Mais" className="flex h-[22px] w-[13px] shrink-0 items-center justify-center">
              <span className="border-x-[3px] border-t-[3px] border-x-transparent border-t-[#777]" />
            </button>
          );
        const on = item[0] === '!';
        const dim = item[0] === '~';
        const name = on || dim ? item.slice(1) : item;
        return (
          <button
            key={i}
            type="button"
            aria-label={name}
            className={clsx(
              'flex h-[21px] w-[22px] shrink-0 items-center justify-center',
              on && 'rounded-xs border border-[#b79a62] bg-linear-to-b from-[#ffc98b] to-[#ffe2a8]',
              dim && 'rounded-xs border border-[#8e9a9c] bg-[#dfe5ea]',
            )}
          >
            <Icon name={name} />
          </button>
        );
      })}
    </>
  );
}

function Band({ children }: { children: ReactNode }) {
  return (
    <div className="mr-[3px] flex h-[25px] items-center rounded-sm bg-linear-to-b from-[#eff2f8] to-[#d6dae5]">
      <span className="flex h-4 w-[9px] shrink-0 justify-center">
        <span className="w-0 border-l-2 border-dotted border-[#a9b1c2]" />
      </span>
      {children}
    </div>
  );
}

function Combo({ label, value, className }: { label: string; value: string; className: string }) {
  return (
    <div className={clsx('relative shrink-0', className)}>
      <select aria-label={label} className="h-[19px] w-full appearance-none overflow-hidden bg-white pr-4 pl-[3px] text-[11px] text-black outline-none">
        <option>{value}</option>
      </select>
      <span className="pointer-events-none absolute inset-y-px right-px flex w-[14px] items-center justify-center border border-[#dde1ea] bg-[#eceef3]">
        <span className="border-x-[3px] border-t-[4px] border-x-transparent border-t-[#888]" />
      </span>
    </div>
  );
}

const menus: [string, string, string][] = [
  ['', 'F', 'icheiro'],
  ['E', 'd', 'itar'],
  ['', 'V', 'er'],
  ['', 'I', 'nserir'],
  ['', 'C', 'álculo'],
  ['', 'R', 'esultados'],
  ['Ferrame', 'n', 'tas'],
  ['', 'T', 'abela'],
  ['', 'O', 'pções'],
  ['', 'M', 'ódulos adicionais'],
  ['', 'J', 'anela'],
  ['', 'A', 'juda'],
];

function Header() {
  return (
    <header className="shrink-0 bg-[#ced3dd]">
      <div className="flex h-[22px] items-center bg-white pl-px text-[11px] text-black">
        <svg viewBox="0 0 16 16" className="mr-1 size-4" aria-hidden="true">
          <path d="M5 3l5-3 6 4v7l-4 3-7-3z" fill="#5a7090" stroke="#28384c" strokeWidth=".7" />
          <path d="M8 3l3-2M10 5l3-2M8 8l5-3M9 11l6-4" stroke="#a4b8d0" />
          <text x="1" y="15" fontSize="11" fontWeight="bold" fontFamily="Liberation Sans" fill="#f4c81c" stroke="#5c4808" strokeWidth=".4">5</text>
        </svg>
        <h1>RFEM 5.22.01 x64 - [200630_glastemp*]</h1>
        <div className="ml-auto flex">
          <button type="button" aria-label="Minimizar" className="flex h-[18px] w-[46px] items-center justify-center">
            <span className="w-[10px] border-t border-black" />
          </button>
          <button type="button" aria-label="Restaurar" className="flex h-[18px] w-[46px] items-center justify-center">
            <svg viewBox="0 0 10 10" className="size-[10px] overflow-visible" fill="none" stroke="#000">
              <path d="M.5 2.500h7v7h-7zM2.500 2.500v-2h7v7h-2" />
            </svg>
          </button>
          <button type="button" aria-label="Fechar" className="flex h-[18px] w-[44px] items-center justify-center">
            <svg viewBox="0 0 10 10" className="size-[10px]" stroke="#000">
              <path d="M0 0l10 10M10 0L0 10" />
            </svg>
          </button>
        </div>
      </div>
      <nav className="flex h-6 items-center text-[11px] text-[#44484f]">
        <span className="ml-[3px] h-4 border-l-2 border-dotted border-[#eef0f5]" />
        <svg viewBox="0 0 16 12" className="mr-[10px] ml-1 h-[13px] w-4" aria-hidden="true">
          <path d="M0 0h16v12H0z" fill="#1c2c64" />
          <path d="M0 9h16M5 2v8M11 2v8M0 8l5-6 3 5 3-5 5 6" stroke="#dfe6f4" fill="none" />
        </svg>
        <div className="flex gap-[15px]">
          {menus.map(([pre, key, post]) => (
            <button key={key + post} type="button">
              {pre}
              <u>{key}</u>
              {post}
            </button>
          ))}
        </div>
        <div className="ml-auto flex items-center gap-[7px] pt-[6px] pr-px text-[#8a8f99]">
          <span className="mt-1 w-[7px] border-t-2" />
          <svg viewBox="0 0 10 8" className="h-2 w-[10px]" fill="none" stroke="currentColor">
            <path d="M.5 2.500h7v5h-7zM2.500.5h7v5" strokeWidth="1.400" />
          </svg>
          <svg viewBox="0 0 9 8" className="h-2 w-[9px]" stroke="currentColor" strokeWidth="2">
            <path d="M0 0l9 8M9 0L0 8" />
          </svg>
        </div>
      </nav>
      <div className="flex h-[26px] text-[11px]">
        <Band>
          <Tools items="new open cabinetBrown cabinetBlue save notepad print preview | undo redo | plane starAxes starTarget select copyYellow | !navTable !tableOn | loadStar" />
          <Combo label="Caso" value="RF-GLASS - Dimensionamento de superfícies de vidro" className="mx-[2px] w-[217px]" />
          <Tools items="prev next eyeGray valGray !eyeOn !valOn | glasses loadsDlg loads" />
        </Band>
        <Band>
          <Tools items="gridHand grid wpXY wpYZ !wpXZ gridMesh wrench | move rotate mirror deleteX info gearDoc gears" />
        </Band>
        <Band>
          <Tools items="imgDown imgUp pdfDown pdfUp" />
        </Band>
      </div>
      <div className="flex h-[26px]">
        <Band>
          <Tools items="node v line member v polyline v | support lineSupport surfSupport | dimension v comment guide | arch v opening v intersect v solid cubes v | joint v nodeLoad lineLoadFaded lineLoad surfLoad freeLoad v" />
        </Band>
        <Band>
          <Tools items="hand zoomWin zoomX cube cubes2 | viewX viewY viewZ viewNX v render v | solidBlue v" />
        </Band>
        <Band>
          <Tools items="frame camera | memberRes ~surfaceFaded solidRes supportRes section panels v wave tblFaded | !panelOn wand v colors v" />
        </Band>
      </div>
    </header>
  );
}

function PanelButtons() {
  return (
    <div className="ml-auto flex items-center gap-[9px] pr-[5px] text-[#6d727b]">
      <button type="button" aria-label="Fixar">
        <svg viewBox="0 0 8 9" className="h-[9px] w-2" fill="none" stroke="currentColor">
          <path d="M2 .5h4v5H2zM0 5.500h8M4 5.500V9M5.500.5v5" />
        </svg>
      </button>
      <button type="button" aria-label="Fechar painel">
        <svg viewBox="0 0 8 8" className="size-2" stroke="currentColor" strokeWidth="1.500">
          <path d="M0 0l8 8M8 0L0 8" />
        </svg>
      </button>
    </div>
  );
}

/* ---------- project navigator ---------- */

type Node = {
  level: number;
  kind: 'mixed' | 'check' | 'radio';
  icon: string;
  label: ReactNode;
  group?: string;
  on?: boolean;
  last?: boolean;
};

const sub = (pre: string, low: string) => (
  <>
    {pre}
    <span className="relative top-[2px] text-[10px]">{low}</span>
  </>
);

const tree: Node[] = [
  { level: 0, kind: 'mixed', icon: 'rainbow', label: 'Resultados do RF-GLASS' },
  { level: 1, kind: 'mixed', icon: 'load', label: 'Selecionar carregamento' },
  { level: 2, kind: 'radio', icon: 'load', label: 'CC2', group: 'load', on: true, last: true },
  { level: 1, kind: 'mixed', icon: 'layers', label: 'Selecionar composição' },
  { level: 2, kind: 'radio', icon: 'layers', label: '1 | Ohne Schubverbund', group: 'comp', on: true },
  { level: 2, kind: 'radio', icon: 'layers', label: '2 | Mit Schubverbund', group: 'comp', last: true },
  { level: 1, kind: 'mixed', icon: 'layers', label: 'Selecionar camada' },
  { level: 2, kind: 'radio', icon: 'layers', label: 'Camada nº 1', group: 'layer', on: true },
  { level: 2, kind: 'radio', icon: 'layers', label: 'Camada nº 3', group: 'layer', last: true },
  { level: 1, kind: 'mixed', icon: 'layers', label: 'Selecionar lado da camada' },
  { level: 2, kind: 'radio', icon: 'layers', label: 'Superior', group: 'side', on: true },
  { level: 2, kind: 'radio', icon: 'layers', label: 'Médio', group: 'side' },
  { level: 2, kind: 'radio', icon: 'layers', label: 'Inferior', group: 'side', last: true },
  { level: 1, kind: 'check', icon: 'surface', label: 'Tensões', last: true },
  { level: 2, kind: 'radio', icon: 'surface', label: sub('σ', 'x'), group: 'stress', on: true },
  { level: 2, kind: 'radio', icon: 'surface', label: sub('σ', 'y'), group: 'stress' },
  { level: 2, kind: 'radio', icon: 'surface', label: sub('τ', 'xy'), group: 'stress' },
  { level: 2, kind: 'radio', icon: 'surface', label: sub('σ', '1'), group: 'stress' },
  { level: 2, kind: 'radio', icon: 'surface', label: sub('σ', '2'), group: 'stress' },
  { level: 2, kind: 'radio', icon: 'surface', label: 'α', group: 'stress' },
  { level: 2, kind: 'radio', icon: 'surface', label: sub('Relação - σ', 'x'), group: 'stress' },
  { level: 2, kind: 'radio', icon: 'surface', label: sub('Relação - σ', 'y'), group: 'stress' },
  { level: 2, kind: 'radio', icon: 'surface', label: sub('Relação - σ', '1'), group: 'stress' },
  { level: 2, kind: 'radio', icon: 'surface', label: sub('Relação - σ', '2'), group: 'stress', last: true },
  { level: 0, kind: 'check', icon: 'values', label: 'Valores nas superfícies', last: true },
];

const lastBranch = tree.findIndex((n) => n.level === 1 && n.last);

function Guide({ node, index }: { node: Node; index: number }) {
  const dots = { stroke: '#777', strokeDasharray: '1 1' };
  return (
    <svg viewBox="0 0 22 18" className="h-[18px] w-[22px]" fill="none">
      {index > 0 && <path d="M9.500 0v9" {...dots} />}
      {!node.last && <path d="M9.500 9v9" {...dots} />}
      <path d="M10 10.500h11" {...dots} />
      {node.level < 2 && (
        <>
          <path d="M5.500 6.500h8v8h-8z" fill="#fff" stroke="#8c96a6" />
          <path d={index === tree.length - 1 ? 'M7 10.500h5M9.500 8v5' : 'M7 10.500h5'} stroke="#2c4c8c" />
        </>
      )}
    </svg>
  );
}

function TreeRow({ node, index }: { node: Node; index: number }) {
  const id = 'node-' + index;
  return (
    <li className="flex h-[18px] items-center pl-[2px]">
      {node.level > 0 && <span className="ml-[9px] h-full w-[10px] border-l border-dotted border-[#888]" />}
      {node.level > 1 && (
        <span className={clsx('ml-[9px] h-full w-[10px]', index < lastBranch && 'border-l border-dotted border-[#888]')} />
      )}
      {node.level < 2 ? (
        <button type="button" aria-label="Expandir">
          <Guide node={node} index={index} />
        </button>
      ) : (
        <Guide node={node} index={index} />
      )}
      {node.kind === 'radio' ? (
        <input
          id={id}
          type="radio"
          name={node.group}
          defaultChecked={node.on}
          className="size-[13px] shrink-0 appearance-none rounded-full border border-[#4e5563] bg-linear-to-br from-[#d2d7e2] to-white checked:bg-[radial-gradient(circle,#111_0_2px,#f4f5f8_3px)]"
        />
      ) : (
        <span className="relative size-[13px] shrink-0">
          <input
            id={id}
            type="checkbox"
            defaultChecked
            className={clsx(
              'block size-[13px] appearance-none border border-[#3f4652]',
              node.kind === 'mixed' ? 'bg-[#9a9a9a] shadow-[inset_0_0_0_2px_#e8eaf0]' : 'bg-[#f4f6fa]',
            )}
          />
          {node.kind === 'check' && (
            <svg viewBox="0 0 13 13" className="pointer-events-none absolute inset-0" fill="none" stroke="#111" strokeWidth="2">
              <path d="M3 6l2.500 3L10 4" />
            </svg>
          )}
        </span>
      )}
      <Icon name={node.icon} className="mr-[5px] ml-[3px] size-[15px]" />
      <label htmlFor={id} className="whitespace-nowrap">
        {node.label}
      </label>
    </li>
  );
}

function Navigator() {
  const tabs = [
    { icon: 'data', label: 'Dados' },
    { icon: 'show', label: 'Mostrar' },
    { icon: 'views', label: 'Vistas' },
    { icon: 'surface', label: 'Resultados' },
  ];
  const [tab, setTab] = useState('Resultados');
  return (
    <aside className="flex w-[306px] shrink-0 flex-col text-[11px]">
      <div className="flex h-[20px] shrink-0 items-center border-t border-r border-t-[#e9ecf2] border-r-[#a3abba] bg-[#b9c1cd] pl-[3px] text-[#40454e]">
        <h2>Navegador de projetos - Resultados</h2>
        <PanelButtons />
      </div>
      <div className="flex-1 overflow-hidden border-r border-b border-[#9299a8] bg-[#e6ebf5] p-[2px] pb-0">
        <ul className="h-full bg-[#fcfbf3] text-black">
          {tree.map((node, i) => (
            <TreeRow key={i} node={node} index={i} />
          ))}
        </ul>
      </div>
      <div className="flex h-6 shrink-0 items-start pl-px text-[#44484f]">
        {tabs.map((t) => (
          <button
            key={t.label}
            type="button"
            onClick={() => setTab(t.label)}
            className={clsx(
              'mr-[6px] flex h-[21px] items-center gap-[2px] px-[3px] pt-[3px]',
              tab === t.label && 'rounded-b-sm border border-t-0 border-[#b4e4ea] bg-[#f1f4f8]',
            )}
          >
            <Icon name={t.icon} className="size-[15px]" />
            {t.label}
          </button>
        ))}
      </div>
    </aside>
  );
}

/* ---------- model view ---------- */

// plate is symmetric about this axis
const AXIS = 561;
const flip = ([x, y]: Pt): Pt => [2 * AXIS - x, y];
const toPath = (pts: Pt[]) => 'M' + pts.map((p) => p.join(' ')).join('L');
const whole = (half: Pt[]) => [...half, ...half.slice(0, -1).reverse().map(flip)];

const layers: { fill: string; half: Pt[] }[] = [
  { fill: '#ffff00', half: [[472, 518], [489, 508], [494, 497], [498, 485], [508, 477], [517, 472], [533, 464], [550, 454], [556, 453], [561, 452]] },
  { fill: '#d0d000', half: [[472, 563], [495, 567], [507, 568], [517, 569], [530, 566], [538, 561], [550, 551], [561, 544]] },
  { fill: '#ffa800', half: [[472, 580], [495, 585], [517, 594], [532, 593], [561, 596]] },
];

const cores: { fill: string; half: Pt[] }[] = [
  { fill: '#ff0000', half: [[509, 651], [510, 637], [513, 622], [516, 615], [527, 612], [535, 613], [549, 617], [561, 621]] },
  { fill: '#bc0000', half: [[513, 651], [515, 637], [519, 630], [528, 623], [537, 625], [549, 633], [561, 641]] },
];

const corners: { fill: string; pts: Pt[] }[] = [
  { fill: '#d0d000', pts: [[650, 603], [637, 606], [625, 613], [620, 622], [619, 635], [618, 651]] },
  { fill: '#ffff00', pts: [[650, 611], [637, 615], [628, 622], [624, 635], [622, 651]] },
  { fill: '#00ff00', pts: [[650, 616], [640, 620], [631, 632], [627, 651]] },
  { fill: '#00e587', pts: [[650, 622], [640, 627], [633, 640], [630, 651]] },
  { fill: '#00f4f4', pts: [[650, 627], [641, 633], [634, 651]] },
  { fill: '#0096ff', pts: [[650, 633], [642, 640], [637, 651]] },
  { fill: '#0000ff', pts: [[650, 637], [645, 643], [641, 651]] },
  { fill: '#0000a0', pts: [[650, 642], [644, 651]] },
];

function FixedSupport({ x }: { x: number }) {
  return (
    <g>
      <path d={`M${x - 22} 275h44v44h-44z`} fill="#3cf53c" />
      <path d={`M${x} 297l22-22v44z`} fill="#35dc3a" />
      <path d={`M${x - 21} 275v44M${x + 21} 275v44`} stroke="#14e020" strokeWidth="2" />
      <circle cx={x} cy="297" r="10" fill="#14f01c" stroke="#18cc24" strokeWidth="2" />
    </g>
  );
}

function ArrowSupport({ x }: { x: number }) {
  return (
    <g fill="#7dff7d">
      <path d={`M${x} 664l22 20h-15v23h-14v-23h-15z`} stroke="#b4ffb4" />
      <circle cx={x} cy="662" r="11" />
      <path d={`M${x - 9} 668q9 4 18 0q-9 10 -18 0z`} fill="#35f435" />
      <path d={`M${x + 6} 653a11 11 0 014 12`} stroke="#63e463" strokeWidth="2" fill="none" />
    </g>
  );
}

function Mesh({ x, stroke, dash }: { x: number; stroke: string; dash?: string }) {
  const cols = [44, 89, 133];
  const rows = [44, 89, 133, 177, 221, 266, 310];
  return (
    <g stroke={stroke} strokeDasharray={dash} fill="none">
      {cols.map((c) => (
        <path key={c} d={`M${x + c + 0.5} 297v354`} />
      ))}
      {rows.map((r) => (
        <path key={r} d={`M${x} ${297 + r + 0.5}h177`} />
      ))}
    </g>
  );
}

function Axes({ x, y, labelX, labelY }: { x: number; y: number; labelX: Pt; labelY: Pt }) {
  return (
    <g fontFamily="Liberation Sans" fontSize="11">
      <path d={`M${x} ${y}h32`} stroke="#f00000" strokeWidth="2" />
      <path d={`M${x + 31} ${y - 3}l10 3-10 3z`} fill="#b00000" />
      <path d={`M${x} ${y}v32`} stroke="#0000f0" strokeWidth="2" />
      <path d={`M${x - 3} ${y + 31}l3 10 3-10z`} fill="#0000b0" />
      <path d={`M${x - 2.5} ${y - 2.5}h5v5h-5z`} fill="#009a00" />
      <text x={labelX[0]} y={labelX[1]} fill="#f00000">X</text>
      <text x={labelY[0]} y={labelY[1]} fill="#0000f0">Z</text>
    </g>
  );
}

function Drawing() {
  const dots: Pt[] = [];
  for (let i = 0; i < 16; i++) for (let j = 0; j < 8; j++) dots.push([Math.round(384 + i * 88.5), Math.round(120 + j * 88.5)]);

  return (
    <svg className="absolute inset-0 size-full" fill="none">
      <g transform="translate(-312 -100)">
        <path d="M1357.500 100v800" stroke="#c4c4c4" />
        <path d="M312 651.500h1600" stroke="#359c94" />
        <path d="M472.500 100v800" stroke="#008080" />
        {dots.map(([x, y]) => (
          <path key={x + '-' + y} d={`M${x} ${y}h1v1h-1z`} fill="#000" />
        ))}

        <FixedSupport x={472} />
        <FixedSupport x={649} />
        <path d="M472 297h178v354H472z" fill="#00ff00" />
        <g stroke="#8a1a10">
          {layers.map((l) => (
            <path key={l.fill} d={toPath(whole(l.half)) + 'L650 651L472 651Z'} fill={l.fill} />
          ))}
          {cores.map((c) => (
            <path key={c.fill} d={toPath(whole(c.half)) + 'Z'} fill={c.fill} />
          ))}
          {corners.map((c) => (
            <Fragment key={c.fill}>
              <path d={toPath(c.pts) + 'L650 651Z'} fill={c.fill} />
              <path d={toPath(c.pts.map(flip)) + 'L472 651Z'} fill={c.fill} />
            </Fragment>
          ))}
        </g>
        <Mesh x={472} stroke="#a0a0a0" dash="1 1" />
        <path d="M472.500 651V297.500h177V651" stroke="#000" />
        <path d="M472 651.500h177" stroke="#58d838" />
        <path d="M471 295h3v3h-3zM648 295h3v3h-3zM648 650h3v3h-3z" fill="#900000" />

        <ArrowSupport x={517} />
        <ArrowSupport x={605} />

        <Mesh x={915} stroke="#d2d2d2" />
        <path d="M915.500 297v354M1092.500 297v354" stroke="#222" />
        <FixedSupport x={915} />
        <FixedSupport x={1092} />
        <path d="M915 297.500h177" stroke="#209020" />
        <path d="M915 651.500h177" stroke="#90f090" />
        <path d="M914 650h3v3h-3zM1091 650h3v3h-3z" fill="#900000" />
        <path d="M914 296h3v3h-3zM1091 296h3v3h-3z" fill="#209020" />
        <ArrowSupport x={959} />
        <ArrowSupport x={1047} />

        <Axes x={472.5} y={651} labelX={[520, 657]} labelY={[469, 705]} />
        <Axes x={367} y={701} labelX={[414, 705]} labelY={[364, 755]} />

        <g fontFamily="Liberation Mono" fontSize="12">
          <path d="M475.500 616.500h39v32h-39z" fill="#fff" fillOpacity=".68" stroke="#111" />
          <path d="M519.500 616.500h32v32h-32z" fill="#fff" fillOpacity=".68" stroke="#111" />
          <text x="477" y="629" fill="#000">M1</text>
          <text x="477" y="643" fill="#b82020">-9.19</text>
          <text x="521" y="629" fill="#000">M9</text>
          <text x="521" y="643" fill="#2020c8">8.65</text>
        </g>
      </g>
    </svg>
  );
}

function ModelView() {
  return (
    <section className="relative min-h-0 flex-1 overflow-hidden border-t border-l border-[#696969] bg-[#fcfcfc] font-['Liberation_Sans',Arial,sans-serif] text-[11px] text-black">
      <Drawing />
      <div className="relative flex h-full flex-col justify-between pl-1 leading-[14px]">
        <div>
          <p>Tensões</p>
          <p>Sigma-x [N/mm^2]</p>
          <p>CC2</p>
          <p>1 | Ohne Schubverbund</p>
          <p>Camada nº 1</p>
          <p>Superior</p>
        </div>
        <p className="pb-[5px]">Máx Sigma-x: 8.65, Mín Sigma-x: -9.19 [N/mm^2]</p>
      </div>
    </section>
  );
}

/* ---------- load table ---------- */

const letters = ['A', 'B', 'C', 'D', 'E', 'F', 'G', 'H', 'I', 'J', 'K', 'L', 'M', 'N'];

const head = 'border-b border-[#9a9a9a] p-0 align-bottom font-normal leading-4';

function LoadTable() {
  return (
    <table className="w-full table-fixed border-separate border-spacing-0 border-t border-l border-[#696969] text-center">
      <colgroup>
        <col className="w-[45px]" />
        <col className="w-[132px]" />
        <col className="w-[84px]" />
        <col className="w-[72px]" />
        <col className="w-[54px]" />
        <col className="w-[42px]" />
        <col className="w-[72px]" />
        <col className="w-[72px]" />
        <col className="w-[42px]" />
        <col className="w-[72px]" />
        <col className="w-[72px]" />
        <col className="w-[42px]" />
        <col className="w-[72px]" />
        <col className="w-[72px]" />
        <col />
      </colgroup>
      <thead>
        <tr className="h-[15px]">
          <th rowSpan={3} className="border-r border-b border-r-[#696969] border-b-[#696969] bg-[#e4e4e4] p-0 pb-1 align-bottom leading-4 font-normal">
            nº
          </th>
          {letters.map((l) => (
            <th
              key={l}
              className={clsx(
                'border border-t-white border-r-[#696969] border-b-[#696969] border-l-white p-0 text-[12px] leading-[13px] font-normal',
                l === 'A' ? 'bg-[#3399ff] text-white' : 'bg-[#e0e0e0]',
              )}
            >
              {l}
            </th>
          ))}
        </tr>
        <tr className="h-4">
          <th rowSpan={2} className={clsx(head, 'border-r')}>Nas superfícies nº</th>
          <th rowSpan={2} className={clsx(head, 'border-r')}>Tipo de carga</th>
          <th rowSpan={2} className={clsx(head, 'border-r')}>Distribuição<br />da carga</th>
          <th rowSpan={2} className={clsx(head, 'border-r')}>Direção<br />da carga</th>
          <th colSpan={3} className="border-r border-[#9a9a9a] p-0 leading-[14px] font-normal">1º vértice</th>
          <th colSpan={3} className="border-r border-[#9a9a9a] p-0 leading-[14px] font-normal">2º vértice</th>
          <th colSpan={3} className="border-r border-[#9a9a9a] p-0 leading-[14px] font-normal">3º vértice</th>
          <th rowSpan={2} className={clsx(head, 'border-r')}>Comentário</th>
        </tr>
        <tr className="h-4">
          <th className={clsx(head, 'border-r')}>Nº</th>
          <th className={clsx(head, 'border-r')}>T <span className="text-[9px]">c</span> [°C]</th>
          <th className={clsx(head, 'border-r')}>ΔT [°C]</th>
          <th className={clsx(head, 'border-r')}>Nº</th>
          <th className={clsx(head, 'border-r')}>p <span className="text-[9px]">2</span></th>
          <th className={clsx(head, 'border-r')} />
          <th className={clsx(head, 'border-r')}>Nº</th>
          <th className={clsx(head, 'border-r')}>p <span className="text-[9px]">3</span></th>
          <th className={clsx(head, 'border-r')} />
        </tr>
      </thead>
      <tbody>
        {[1, 2, 3].map((row) => (
          <tr key={row} className="h-4">
            <th
              scope="row"
              className={clsx(
                'border-r border-b border-r-[#696969] border-b-[#696969] p-0 text-[12px] leading-[15px] font-normal',
                row === 1 ? 'bg-[#3399ff] text-white' : 'bg-[#e0e0e0]',
              )}
            >
              {row}
            </th>
            {letters.map((l, c) => {
              const locked = row === 1 && 'DEHIJKLM'.includes(l);
              return (
                <td
                  key={l}
                  className={clsx(
                    'border-r border-b border-[#9a9a9a] p-0 leading-[15px]',
                    row === 1 && (locked ? 'bg-[#d9d9d9]' : 'bg-[#ebebeb]'),
                    row > 1 && c < 3 && 'bg-white',
                  )}
                >
                  {row === 1 && l === 'A' && (
                    <span className="flex h-[15px] items-stretch border border-black">
                      <input aria-label="Nas superfícies nº" defaultValue="1,2" className="min-w-0 flex-1 bg-transparent pl-[3px] outline-none" />
                      <button type="button" aria-label="Selecionar" className="flex w-3 items-center justify-center border border-white border-r-[#777] border-b-[#777] bg-[#e0e0e0]">
                        <svg viewBox="0 0 8 11" className="h-[10px] w-2" fill="#fff" stroke="#556">
                          <path d="M1 1l6 5H4.500l1.500 4H4.500L3 7 1 8.500z" strokeWidth=".8" />
                        </svg>
                      </button>
                    </span>
                  )}
                  {row === 1 && l === 'B' && 'Temperatura'}
                  {row === 1 && l === 'C' && <><u>C</u>onstante</>}
                  {row === 1 && l === 'F' && <span className="block pr-1 text-right">0.0</span>}
                  {row === 1 && l === 'G' && <span className="block pr-1 text-right">-30.0</span>}
                </td>
              );
            })}
          </tr>
        ))}
      </tbody>
    </table>
  );
}

const sheets = [
  { label: 'Cargas nodais', width: 'w-[76px]' },
  { label: 'Cargas em barras', width: 'w-[93px]' },
  { label: 'Cargas em linha', width: 'w-[85px]' },
  { label: 'Cargas de superfície', width: 'w-[107px]' },
  { label: 'Cargas de sólidos', width: 'w-[94px]' },
  { label: 'Cargas concentradas livres', width: 'w-[138px]' },
  { label: 'Cargas em linha livres', width: 'w-[112px]' },
  { label: 'Cargas retangulares livres', width: 'w-[131px]' },
  { label: 'Cargas circulares livres', width: 'w-[118px]' },
  { label: 'Cargas poligonais livres', width: 'w-[120px]' },
  { label: 'Cargas variáveis livres', width: 'w-[115px]' },
  { label: 'Deformações de nós impostas', width: 'w-[152px]' },
];

function TablePanel() {
  const [sheet, setSheet] = useState('Cargas de superfície');
  return (
    <section className="mt-[6px] flex shrink-0 flex-col font-['Liberation_Sans',Arial,sans-serif] text-[11px] text-black">
      <div className="rounded-t-sm bg-linear-to-b from-[#e9edf6] from-50% to-[#cfd4de] font-['Noto_Sans',sans-serif]">
        <div className="flex h-[21px] items-center pl-[3px] text-[#40454e]">
          <h2>3.4 Cargas de superfície</h2>
          <PanelButtons />
        </div>
        <div className="flex h-[24px] items-center pb-[2px] pl-2">
          <Tools items="tblTri tblAdd !tblDown tblSlope tblWave | tblLeft tblRight | sync1 !sync2 sync3 | tPlus tX tDots | tDel | rowDel rowLeft rowRight | hdrYellow hdrBlue hdrStar | !loadActive | loadStar handTbl |" />
          <Combo label="Caso de carga" value="CC2" className="mx-[2px] w-[196px]" />
          <Tools items="| prev | nextOn | rowsUp rowsDown | glasses | excel | calc | abEq fx fxOff" />
        </div>
      </div>
      <div className="flex h-[118px] items-start border-t border-r border-b border-l border-[#696969] bg-[#efefef] pt-px pr-px pl-px">
        <div className="min-w-0 flex-1">
          <LoadTable />
        </div>
        <div className="mx-px flex h-[96px] w-[16px] shrink-0 flex-col border-r border-[#9a9a9a]">
          <button type="button" aria-label="Acima" className="flex h-4 items-center justify-center">
            <svg viewBox="0 0 8 5" className="h-[5px] w-2" fill="none" stroke="#555" strokeWidth="2">
              <path d="M0 5l4-4 4 4" />
            </svg>
          </button>
          <span className="flex-1 bg-[#cdcdcd]" />
          <button type="button" aria-label="Abaixo" className="flex h-[17px] items-center justify-center">
            <svg viewBox="0 0 8 5" className="h-[5px] w-2" fill="none" stroke="#555" strokeWidth="2">
              <path d="M0 0l4 4 4-4" />
            </svg>
          </button>
        </div>
      </div>
      <div className="flex h-[17px] items-stretch bg-[#efefef]">
        {sheets.map((s) => (
          <button
            key={s.label}
            type="button"
            onClick={() => setSheet(s.label)}
            className={clsx(
              'h-[17px] shrink-0 rounded-b-[4px] border-r border-b border-l border-[#696969] leading-4 whitespace-nowrap',
              s.width,
              sheet === s.label ? '-mt-px bg-[#f2f2f2]' : 'bg-[#e2e2e2]',
            )}
          >
            {s.label}
          </button>
        ))}
        <div className="ml-auto flex">
          {['M4 3v7M11 3v7L6 6.500z', 'M10 3v7L5 6.500z', 'M5 3v7l5-3.500z', 'M4 3v7l5-3.500zM11 3v7'].map((d, i) => (
            <button
              key={d}
              type="button"
              aria-label="Deslocar separadores"
              className={clsx('w-4 border border-t-white border-r-[#696969] border-b-[#696969] border-l-white', i < 2 ? 'text-[#a0a0a0]' : 'text-black')}
            >
              <svg viewBox="0 0 15 13" className="h-[13px] w-[14px]" fill="currentColor" stroke="currentColor">
                <path d={d} />
              </svg>
            </button>
          ))}
        </div>
      </div>
      <p className="h-[19px] border-t border-white bg-[#efefef] pl-px font-['Noto_Sans',sans-serif] leading-[20px]">Introduza o número da superfície.</p>
    </section>
  );
}

/* ---------- colour panel ---------- */

const scaleColors = [
  'bg-[#bc0000]',
  'bg-[#ff0000]',
  'bg-[#ffa800]',
  'bg-[#d0d000]',
  'bg-[#ffff00]',
  'bg-[#00ff00]',
  'bg-[#00e587]',
  'bg-[#00f4f4]',
  'bg-[#0096ff]',
  'bg-[#0000ff]',
  'bg-[#0000a0]',
];

const scaleValues = ['8.65', '7.03', '5.40', '3.78', '2.16', '0.54', '-1.08', '-2.71', '-4.33', '-5.95', '-7.57', '-9.19'];

function ColorPanel() {
  return (
    <aside className="flex w-[155px] shrink-0 flex-col border-l border-[#a9b3c4] text-[11px] text-black">
      <div className="flex h-[20px] shrink-0 items-center border-t border-[#e9ecf2] bg-[#b9c1cd] pl-[3px] text-[#40454e]">
        <h2>Painel</h2>
        <PanelButtons />
      </div>
      <div className="flex flex-1 flex-col border-b border-[#777] bg-[#efefef] pt-1 pr-[3px] pl-[5px]">
        <p className="leading-[17px]">Tensões para CC2</p>
        <p className="leading-[17px]">
          Sigma-x [N/mm<sup className="text-[9px]">2</sup> ]
        </p>
        <div className="mt-px flex h-[214px] justify-center border border-t-[#a0a0a0] border-r-white border-b-white border-l-[#a0a0a0] bg-[#faf7f0] pt-[2px] pr-px">
          <div className="mt-2 mr-[6px]">
            <div className="border-t border-black">
              {scaleColors.map((c) => (
                <div key={c} className={clsx('h-[17px] w-[27px] border-x border-b border-black', c)} />
              ))}
            </div>
          </div>
          <ul className="-ml-[6px]">
            {scaleValues.map((v) => (
              <li key={v} className="flex h-[17px] w-[35px] items-center justify-between">
                <span className="w-[6px] border-t border-black" />
                {v}
              </li>
            ))}
          </ul>
        </div>
        <dl className="mt-[10px] grid grid-cols-[auto_35px] justify-center gap-x-[7px] border border-t-[#dbe3f2] border-r-[#a8acee] border-b-[#a8acee] border-l-[#dbe3f2] bg-[#f0f4fb] py-px leading-4">
          <dt>Máx &nbsp;:</dt>
          <dd className="text-right">8.65</dd>
          <dt>Mín &nbsp;&nbsp;:</dt>
          <dd className="text-right">-9.19</dd>
        </dl>
        <button type="button" className="mx-1 mt-5 h-[24px] border border-[#adadad] bg-[#e1e1e1]">
          RF-GLASS
        </button>
        <button type="button" aria-label="Pesquisar" className="mt-[93px] -mr-[2px] flex h-[22px] w-[25px] items-center justify-center self-end border border-[#a9adb6] bg-[#e4e7ee]">
          <Icon name="search" />
        </button>
      </div>
      <div className="flex h-6 shrink-0 items-start gap-[6px] pl-px">
        <button type="button" aria-label="Escala de cores" className="flex h-[21px] w-6 items-center justify-center rounded-b-sm border border-t-0 border-[#b4e4ea] bg-[#f6f7f9]">
          <Icon name="legend" />
        </button>
        <button type="button" aria-label="Fatores" className="flex h-[21px] w-6 items-center justify-center">
          <Icon name="scale" className="size-[15px]" />
        </button>
        <button type="button" aria-label="Filtro" className="flex h-[21px] w-6 items-center justify-center">
          <Icon name="micro" className="size-[15px]" />
        </button>
      </div>
    </aside>
  );
}

const toggles = [
  { label: 'AJUSTAR', width: 'w-[53px]' },
  { label: 'GRELHA', width: 'w-[50px]' },
  { label: 'CARTES', width: 'w-[50px]' },
  { label: 'AJUST. OBJ.', width: 'w-[67px]' },
  { label: 'LINHAS AUX.', width: 'w-[73px]' },
  { label: 'DXF', width: 'w-[28px]' },
];

function StatusBar() {
  return (
    <footer className="flex h-[22px] shrink-0 items-center border-t border-b border-t-[#9aa0ac] border-b-[#222] bg-linear-to-b from-[#dcdfe6] via-[#aab0bc] via-40% to-[#b9bdc7] font-['Liberation_Sans',Arial,sans-serif] text-[11px] text-[#333]">
      <div className="ml-auto flex gap-[2px]">
        {toggles.map((t) => (
          <button
            key={t.label}
            type="button"
            className={clsx('h-[19px] border border-t-black border-r-white border-b-white border-l-black leading-4 whitespace-nowrap', t.width)}
          >
            {t.label}
          </button>
        ))}
      </div>
      <span className="ml-px h-[17px] w-[188px] border-l border-[#8f949e]" />
      <span className="h-[17px] w-[88px] border-l border-[#8f949e]" />
      <span className="h-[17px] w-[74px] border-l border-[#8f949e]" />
      <span className="h-[17px] w-[74px] border-l border-[#8f949e]" />
      <span className="h-[17px] w-[70px] border-l border-[#8f949e]" />
    </footer>
  );
}

export default function App() {
  return (
    <div className="flex h-screen flex-col overflow-hidden bg-[#ced3dd] font-['Noto_Sans','Segoe_UI',sans-serif]">
      <Header />
      <div className="flex min-h-0 flex-1">
        <Navigator />
        <main className="mr-[5px] ml-[5px] flex min-w-0 flex-1 flex-col pt-px">
          <ModelView />
          <TablePanel />
        </main>
        <ColorPanel />
      </div>
      <StatusBar />
    </div>
  );
}
